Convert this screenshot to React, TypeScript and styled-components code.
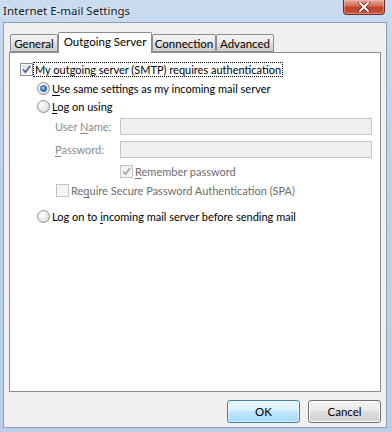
import React from "react";
import styled, { createGlobalStyle } from "styled-components";

const Global = createGlobalStyle`
  html, body { margin: 0; padding: 0; }
  body {
    width: 392px; height: 432px; overflow: hidden;
    font-family: Lato, "Noto Sans", sans-serif;
    font-size: 11px; color: #000;
  }
  * { box-sizing: border-box; }
`;

const Window = styled.div`
  width: 392px; height: 432px;
  background: linear-gradient(180deg, #c9dbef 0%, #bed3eb 30%, #b9cfe9 100%);
  display: flex; flex-direction: column;
`;

const TitleBar = styled.div`
  height: 22px; flex: none;
  display: flex; align-items: flex-start;
  padding: 0 7px 0 3px;
`;

const Title = styled.div`
  margin-top: 3px;
  font-family: "Noto Sans", sans-serif;
  font-size: 11.5px; line-height: 16px;
  color: #1b1b1b;
  text-shadow: 0 0 6px rgba(255, 255, 255, 0.95);
`;

const CloseButton = styled.div`
  margin-left: auto;
  width: 42px; height: 15px;
  border: 1px solid #6b2c24; border-top: none;
  border-radius: 0 0 4px 4px;
  background: linear-gradient(180deg, #e7a89a 0%, #d4705c 40%, #bf4128 55%, #c9573e 100%);
  box-shadow: inset 0 0 0 1px rgba(255, 200, 190, 0.45);
  display: flex; align-items: center; justify-content: center;
`;

const Client = styled.div`
  flex: 1;
  margin: 0 5px 4px 3px;
  background: #f0f0f0;
  border: 1px solid #8d9fb4;
  display: flex; flex-direction: column;
  padding: 9px 5px 4px 5px;
`;

const TabRow = styled.div`
  display: flex; align-items: flex-end;
  height: 21px; flex: none;
  padding-left: 1px;
  margin-bottom: -1px;
  position: relative; z-index: 1;
`;

const Tab = styled.div<{ $w: number; $active?: boolean }>`
  width: ${(p) => p.$w}px;
  height: ${(p) => (p.$active ? 21 : 18)}px;
  margin-bottom: ${(p) => (p.$active ? 0 : 1)}px;
  border: 1px solid #898c95;
  border-bottom: ${(p) => (p.$active ? "none" : "1px solid #898c95")};
  border-radius: 2px 2px 0 0;
  background: ${(p) =>
    p.$active
      ? "#ffffff"
      : "linear-gradient(180deg, #f3f3f3 0%, #ebebeb 45%, #dddddd 50%, #d0d0d0 100%)"};
  display: flex; justify-content: center;
  padding-top: 2px;
  font-size: 11.5px; line-height: 14px;
  white-space: nowrap;
`;

const Panel = styled.div`
  flex: 1;
  background: #fff;
  border: 1px solid #898c95;
  padding: 8px 0 0 10px;
  display: flex; flex-direction: column;
`;

const Row = styled.div<{ $indent?: number; $h?: number; $mt?: number }>`
  display: flex; align-items: center;
  height: ${(p) => p.$h ?? 18}px;
  margin-left: ${(p) => p.$indent ?? 0}px;
  margin-top: ${(p) => p.$mt ?? 0}px;
  white-space: nowrap;
`;

const Label = styled.span<{ $disabled?: boolean; $focus?: boolean }>`
  font-size: 11px; line-height: 13px;
  color: ${(p) => (p.$disabled ? "#6d6d6d" : "#000")};
  margin-left: ${(p) => (p.$focus ? 0 : 2)}px;
  padding: ${(p) => (p.$focus ? "0 1px" : "0")};
  border: ${(p) => (p.$focus ? "1px dotted #000" : "none")};
`;

const FieldLabel = styled.span`
  width: 65px; flex: none;
  color: #8a8a8a;
  font-size: 11px;
`;

const Input = styled.div`
  width: 252px; height: 17px;
  background: #efefef;
  border: 1px solid #c2c5ca;
`;

const Box = styled.div<{ $disabled?: boolean }>`
  width: 13px; height: 13px; flex: none;
  border: 1px solid ${(p) => (p.$disabled ? "#c4c4c4" : "#8e8f8f")};
  background: ${(p) =>
    p.$disabled
      ? "#f4f4f4"
      : "linear-gradient(135deg, #dcdcdc 0%, #f0f0f0 50%, #fbfbfb 100%)"};
  box-shadow: inset 0 0 0 1px ${(p) => (p.$disabled ? "#f4f4f4" : "#f5f5f5")};
  display: flex; align-items: center; justify-content: center;
`;

const Radio = styled.div`
  width: 13px; height: 13px; flex: none;
  border-radius: 50%;
  border: 1px solid #8e8f8f;
  background: radial-gradient(circle at 35% 30%, #ffffff 0%, #e8e8e8 55%, #cfcfcf 100%);
  display: flex; align-items: center; justify-content: center;
`;

const RadioDot = styled.div`
  width: 7px; height: 7px; border-radius: 50%;
  background: radial-gradient(circle at 40% 35%, #bfe3ff 0%, #3d8ee0 45%, #1d4f9c 100%);
  border: 1px solid #1f4f8f;
`;

const ButtonRow = styled.div`
  display: flex; justify-content: flex-end; gap: 8px;
  margin-top: 8px;
  flex: none;
`;

const Button = styled.div<{ $default?: boolean }>`
  width: 73px; height: 23px;
  border-radius: 3px;
  border: 1px solid ${(p) => (p.$default ? "#3c7fb1" : "#707070")};
  background: ${(p) =>
    p.$default
      ? "linear-gradient(180deg, #eaf6fd 0%, #d9f0fc 45%, #bee6fd 50%, #a7d9f5 100%)"
      : "linear-gradient(180deg, #f2f2f2 0%, #ebebeb 45%, #dddddd 50%, #cfcfcf 100%)"};
  box-shadow: inset 0 0 0 1px ${(p) => (p.$default ? "rgba(255,255,255,0.6)" : "#fcfcfc")};
  display: flex; align-items: center; justify-content: center;
  font-size: 11.5px;
`;

const U = styled.u`
  text-decoration-thickness: 1px;
  text-underline-offset: 2px;
`;

const Check = ({ disabled }: { disabled?: boolean }) => (
  <svg width="9" height="9" viewBox="0 0 9 9">
    <path
      d="M1 4.5 L3.5 7.2 L8 1"
      fill="none"
      stroke={disabled ? "#a8a8a8" : "#4a5f97"}
      strokeWidth="1.8"
    />
  </svg>
);

const CloseX = () => (
  <svg width="12" height="10" viewBox="0 0 12 10">
    <path d="M2 1 L10 9 M10 1 L2 9" stroke="#5b1e14" strokeWidth="3.4" strokeLinecap="square" />
    <path d="M2 1 L10 9 M10 1 L2 9" stroke="#ffffff" strokeWidth="2" strokeLinecap="square" />
  </svg>
);

export default function App() {
  return (
    <>
      <Global />
      <Window>
        <TitleBar>
          <Title>Internet E-mail Settings</Title>
          <CloseButton>
            <CloseX />
          </CloseButton>
        </TitleBar>
        <Client>
          <TabRow>
            <Tab $w={48}>General</Tab>
            <Tab $w={94} $active>
              Outgoing Server
            </Tab>
            <Tab $w={64}>Connection</Tab>
            <Tab $w={58}>Advanced</Tab>
          </TabRow>
          <Panel>
            <Row $h={17}>
              <Box>
                <Check />
              </Box>
              <Label $focus>
                My <U>o</U>utgoing server (SMTP) requires authentication
              </Label>
            </Row>
            <Row $indent={17} $mt={1}>
              <Radio>
                <RadioDot />
              </Radio>
              <Label>
                <U>U</U>se same settings as my incoming mail server
              </Label>
            </Row>
            <Row $indent={17}>
              <Radio />
              <Label>
                <U>L</U>og on using
              </Label>
            </Row>
            <Row $indent={35} $h={17} $mt={3}>
              <FieldLabel>
                User <U>N</U>ame:
              </FieldLabel>
              <Input />
            </Row>
            <Row $indent={35} $h={17} $mt={6}>
              <FieldLabel>
                <U>P</U>assword:
              </FieldLabel>
              <Input />
            </Row>
            <Row $indent={100} $h={17} $mt={5}>
              <Box $disabled>
                <Check disabled />
              </Box>
              <Label $disabled>
                <U>R</U>emember password
              </Label>
            </Row>
            <Row $indent={36} $h={17} $mt={2}>
              <Box $disabled />
              <Label $disabled>
                Re<U>q</U>uire Secure Password Authentication (SPA)
              </Label>
            </Row>
            <Row $indent={17} $mt={8}>
              <Radio />
              <Label>
                Log on to <U>i</U>ncoming mail server before sending mail
              </Label>
            </Row>
          </Panel>
          <ButtonRow>
            <Button $default>OK</Button>
            <Button>Cancel</Button>
          </ButtonRow>
        </Client>
      </Window>
    </>
  );
}
